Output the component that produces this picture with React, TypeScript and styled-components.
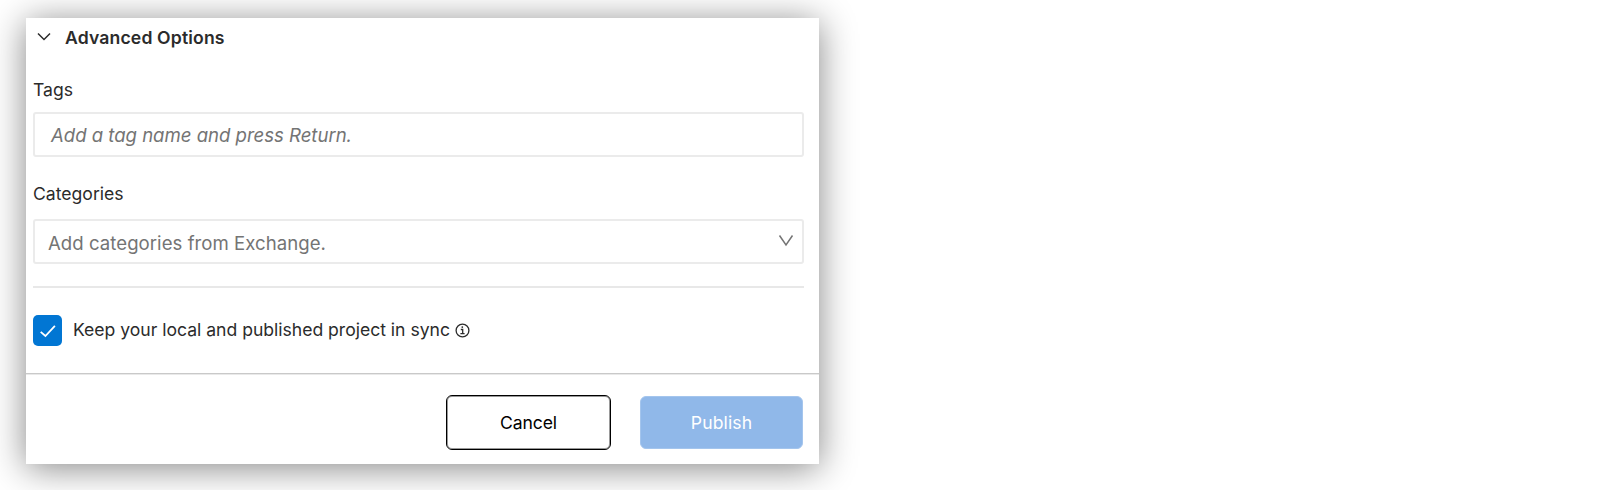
import React from "react";
import styled, { createGlobalStyle } from "styled-components";

const GlobalStyle = createGlobalStyle`
  * { box-sizing: border-box; }
  html, body { margin: 0; background: #fff; }
  body {
    font-family: Inter, "Liberation Sans", sans-serif;
    color: #2b2b2b;
    overflow: hidden;
  }
`;

const Page = styled.main`
  height: 490px;
  padding: 18px 0 0 26px;
  overflow: hidden;
`;

const Dialog = styled.section`
  width: 793px;
  height: 446px;
  display: flex;
  flex-direction: column;
  background: #fff;
  box-shadow: 0 4px 34px rgba(0, 0, 0, 0.48);
`;

const Body = styled.div`
  height: 355px;
  padding: 0 15px 0 7px;
  display: flex;
  flex-direction: column;
`;

const Header = styled.header`
  height: 40px;
  display: flex;
  align-items: center;
  padding-left: 4px;
`;

const Chevron = styled.svg`
  margin-bottom: 2px;
`;

const Title = styled.h2`
  margin: 0 0 0 14px;
  font-size: 17.6px;
  line-height: 40px;
  font-weight: 600;
  letter-spacing: 0.15px;
`;

const Label = styled.label<{ $top: number }>`
  margin-top: ${(p) => p.$top}px;
  height: 24px;
  font-size: 17.6px;
  line-height: 24px;
`;

const Field = styled.div<{ $top: number; $inset: number }>`
  margin-top: ${(p) => p.$top}px;
  height: 45px;
  display: flex;
  align-items: center;
  justify-content: space-between;
  padding: 0 8px 0 ${(p) => p.$inset}px;
  border: 2px solid #ebebeb;
  border-radius: 3px;
`;

const Placeholder = styled.span<{ $italic?: boolean }>`
  font-size: 18.6px;
  line-height: 24px;
  font-style: ${(p) => (p.$italic ? "italic" : "normal")};
  letter-spacing: ${(p) => (p.$italic ? -0.03 : 0.04)}px;
  color: #747474;
  padding-top: ${(p) => (p.$italic ? 1 : 3)}px;
`;

const Divider = styled.hr`
  width: 100%;
  height: 2px;
  margin: 22px 0 0;
  border: 0;
  background: #e8e8e8;
`;

const SyncRow = styled.div`
  margin-top: 27px;
  height: 31px;
  display: flex;
  align-items: center;
`;

const Checkbox = styled.span`
  width: 29px;
  height: 31px;
  border-radius: 5px;
  background: #0176d3;
  display: flex;
  align-items: center;
  justify-content: center;
`;

const SyncText = styled.span`
  margin-left: 11px;
  margin-right: 5px;
  margin-bottom: 2px;
  font-size: 17.6px;
  line-height: 28px;
  letter-spacing: -0.02px;
`;

const InfoIcon = styled.svg`
  margin-bottom: 1px;
`;

const Footer = styled.footer`
  flex: 1;
  display: flex;
  justify-content: flex-end;
  align-items: flex-start;
  gap: 29px;
  padding: 21px 16px 0 0;
  border-top: 1px solid #c9c9c9;
  box-shadow: inset 0 1px 0 #e9e9e9;
`;

const Button = styled.button<{ $primary?: boolean }>`
  width: ${(p) => (p.$primary ? 163 : 165)}px;
  height: ${(p) => (p.$primary ? 53 : 55)}px;
  margin-top: ${(p) => (p.$primary ? 1 : 0)}px;
  padding: 0 0 1px;
  border: ${(p) => (p.$primary ? "1px solid #a4c5ed" : "1px solid #000")};
  border-radius: 6px;
  background: ${(p) => (p.$primary ? "#90b8e9" : "#fff")};
  box-shadow: ${(p) => (p.$primary ? "none" : "inset 0 0 0 1px #999")};
  color: ${(p) => (p.$primary ? "#fff" : "#000")};
  font-family: inherit;
  font-size: 17.6px;
  letter-spacing: ${(p) => (p.$primary ? 0.1 : -0.1)}px;
`;

export default function App() {
  return (
    <Page>
      <GlobalStyle />
      <Dialog>
        <Body>
          <Header>
            <Chevron width="14" height="10" viewBox="0 0 14 10" fill="none" stroke="#2b2b2b" strokeWidth="1.5">
              <path d="M1 1.5 7 7.5 13 1.5" />
            </Chevron>
            <Title>Advanced Options</Title>
          </Header>
          <Label $top={20}>Tags</Label>
          <Field $top={10} $inset={16}>
            <Placeholder $italic>Add a tag name and press Return.</Placeholder>
          </Field>
          <Label $top={25}>Categories</Label>
          <Field $top={13} $inset={13}>
            <Placeholder>Add categories from Exchange.</Placeholder>
            <Chevron width="16" height="14" viewBox="0 0 16 14" fill="none" stroke="#747474" strokeWidth="1.5">
              <path d="M1.5 1.5 8 11 14.5 1.5" />
            </Chevron>
          </Field>
          <Divider />
          <SyncRow>
            <Checkbox>
              <svg width="17" height="14" viewBox="0 0 17 14" fill="none" stroke="#fff" strokeWidth="1.8">
                <path d="M1.7 7.8 6.4 12 15.9 1.8" />
              </svg>
            </Checkbox>
            <SyncText>Keep your local and published project in sync</SyncText>
            <InfoIcon width="15" height="15" viewBox="0 0 15 15" fill="none" stroke="#2b2b2b" strokeWidth="1.3">
              <circle cx="7.5" cy="7.5" r="6.4" />
              <path d="M5.8 6.5h1.9v4.2M5.4 10.7h4.2" />
              <circle cx="7.3" cy="4.1" r="0.9" fill="#2b2b2b" stroke="none" />
            </InfoIcon>
          </SyncRow>
        </Body>
        <Footer>
          <Button>Cancel</Button>
          <Button $primary>Publish</Button>
        </Footer>
      </Dialog>
    </Page>
  );
}
